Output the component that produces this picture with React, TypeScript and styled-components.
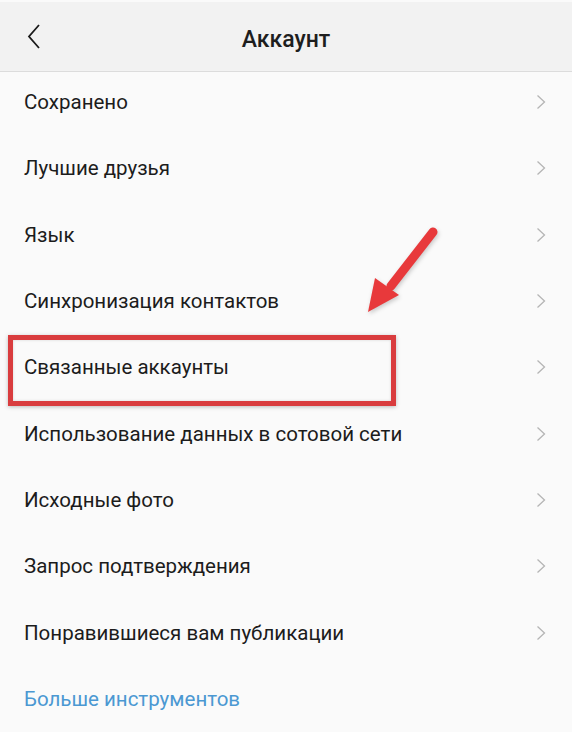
import styled, { createGlobalStyle } from 'styled-components'

const GlobalStyle = createGlobalStyle`
  html, body {
    margin: 0;
    padding: 0;
    background: #fafafa;
  }
  body {
    font-family: Roboto, "Noto Sans", "Liberation Sans", sans-serif;
  }
`

const Screen = styled.div`
  position: relative;
  width: 572px;
  height: 732px;
  overflow: hidden;
  background: #fafafa;
`

const Header = styled.header`
  display: grid;
  grid-template-columns: 64px 1fr 64px;
  align-items: center;
  height: 69px;
  margin-top: 2px;
  background: #f2f2f2;
  border-bottom: 1px solid #dcdcdc;
`

const BackButton = styled.button`
  display: flex;
  justify-self: start;
  margin-left: 25px;
  padding: 0;
  border: none;
  background: none;
`

const Title = styled.h1`
  margin: 6px 0 0;
  text-align: center;
  font-size: 23px;
  font-weight: 500;
  color: #1e1e1e;
`

const List = styled.ul`
  list-style: none;
  margin: -3px 0 0;
  padding: 0;
`

const Row = styled.li<{ $link?: boolean }>`
  display: flex;
  align-items: center;
  justify-content: space-between;
  height: 66.3px;
  padding: 0 26px 0 24px;
  font-size: 20.5px;
  color: ${({ $link }) => ($link ? '#4b98d2' : '#1c1c1c')};
`

const Highlight = styled.div`
  position: absolute;
  left: 8px;
  top: 335px;
  width: 378px;
  height: 61px;
  border: 5px solid #d93c3e;
  box-shadow: 0 1px 4px rgba(0, 0, 0, 0.25), inset 0 0 3px rgba(0, 0, 0, 0.15);
`

const Arrow = styled.svg`
  position: absolute;
  left: 360px;
  top: 222px;
  filter: drop-shadow(1px 2px 2px rgba(0, 0, 0, 0.2));
`

const Chevron = () => (
  <svg width="10" height="16" viewBox="0 0 10 16">
    <path d="M1.5 1.5 L8.5 8 L1.5 14.5" fill="none" stroke="#b5b5b5" strokeWidth="1.3" />
  </svg>
)

const items = [
  'Сохранено',
  'Лучшие друзья',
  'Язык',
  'Синхронизация контактов',
  'Связанные аккаунты',
  'Использование данных в сотовой сети',
  'Исходные фото',
  'Запрос подтверждения',
  'Понравившиеся вам публикации',
]

export default function App() {
  return (
    <>
      <GlobalStyle />
      <Screen>
        <Header>
          <BackButton aria-label="Назад">
            <svg width="18" height="28" viewBox="0 0 18 28">
              <path d="M14 2 L4 13.5 L14 25" fill="none" stroke="#1a1a1a" strokeWidth="1.8" />
            </svg>
          </BackButton>
          <Title>Аккаунт</Title>
        </Header>
        <List>
          {items.map((label) => (
            <Row key={label}>
              {label}
              <Chevron />
            </Row>
          ))}
          <Row $link>Больше инструментов</Row>
        </List>
        <Highlight />
        <Arrow width="90" height="100" viewBox="0 0 90 100">
          <line x1="73" y1="10" x2="31" y2="64" stroke="#e8393b" strokeWidth="9" strokeLinecap="round" />
          <polygon points="8,90 15,56 39,73" fill="#e8393b" />
        </Arrow>
      </Screen>
    </>
  )
}
